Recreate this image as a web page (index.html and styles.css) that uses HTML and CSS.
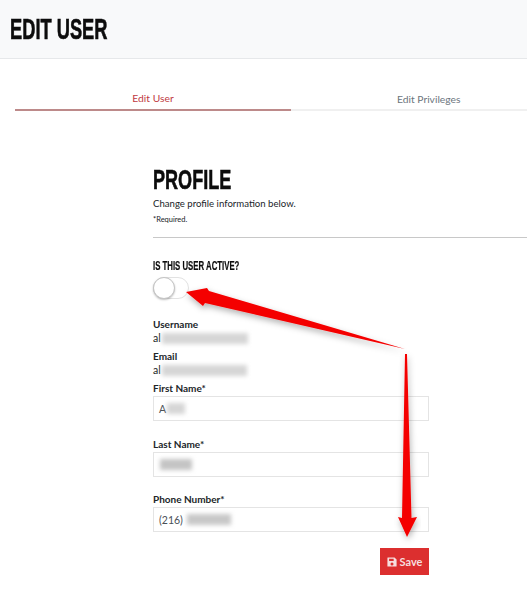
FILE: index.html
```html
<!DOCTYPE html>
<html lang="en">

<head>
    <meta charset="UTF-8">
    <meta name="viewport" content="width=device-width, initial-scale=1.0">
    <title>Edit User</title>
    <link rel="stylesheet" href="styles.css">
</head>

<body>
    <header class="page-header">
        <h1 class="page-title">EDIT USER</h1>
    </header>

    <nav class="tabs">
        <a class="tab tab-active" href="#">Edit User</a>
        <a class="tab tab-second" href="#">Edit Privileges</a>
    </nav>

    <main class="profile">
        <h2 class="profile-title">PROFILE</h2>
        <p class="profile-note">Change profile information below.</p>
        <p class="profile-required">*Required.</p>
        <hr class="profile-rule">

        <h3 class="active-label">IS THIS USER ACTIVE?</h3>
        <div class="switch"><span class="switch-knob"></span></div>

        <div class="static-field">
            <div class="field-label">Username</div>
            <div class="static-value">al<span class="blur blur-username"></span></div>
        </div>
        <div class="static-field">
            <div class="field-label">Email</div>
            <div class="static-value">al<span class="blur blur-email"></span></div>
        </div>

        <div class="form-field">
            <label class="field-label">First Name*</label>
            <div class="text-box">A<span class="blur blur-first"></span></div>
        </div>
        <div class="form-field">
            <label class="field-label">Last Name*</label>
            <div class="text-box"><span class="blur blur-last"></span></div>
        </div>
        <div class="form-field form-field-phone">
            <label class="field-label">Phone Number*</label>
            <div class="text-box">(216)<span class="blur blur-phone"></span></div>
        </div>

        <div class="form-actions">
            <button class="save-btn">
                <svg class="save-icon" viewBox="0 0 12 12" width="10" height="10">
                    <path fill="currentColor" fill-rule="evenodd" d="M1 0.5h8l2.5 2.5v8a0.5 0.5 0 0 1-0.5 0.5H1a0.5 0.5 0 0 1-0.5-0.5V1a0.5 0.5 0 0 1 0.5-0.5zM2.5 2v2.8h5.5V2zM6 6.5a1.8 1.8 0 1 0 0 3.6a1.8 1.8 0 0 0 0-3.6z"/>
                </svg>
                Save
            </button>
        </div>
    </main>

    <svg class="arrows" viewBox="0 0 527 589" width="527" height="589">
        <defs>
            <filter id="arrowShadow" x="-20%" y="-20%" width="140%" height="140%">
                <feDropShadow dx="1" dy="3" stdDeviation="3" flood-color="#000" flood-opacity="0.3"/>
            </filter>
        </defs>
        <polygon filter="url(#arrowShadow)" fill="#f40000" points="405,349 209,291 207,288 186,292 203,306 205,303"/>
        <polygon filter="url(#arrowShadow)" fill="#f40000" points="405,354 407,354 411.5,518 417,517 407,537 398,517 402,518"/>
    </svg>
</body>

</html>
```

FILE: styles.css
```css
* {
    margin: 0;
    padding: 0;
    box-sizing: border-box;
}

body {
    position: relative;
    width: 527px;
    height: 589px;
    overflow: hidden;
    background-color: white;
    font-family: Lato, "Open Sans", sans-serif;
    font-size: 11px;
    color: #212529;
}

.page-header {
    height: 59px;
    padding: 12px 10px 0;
    background-color: #f8f9fa;
    border-bottom: 1px solid #e6e8ea;
}

/* no condensed face installed, so the display headings get squeezed */
.page-title,
.profile-title,
.active-label {
    font-family: "Liberation Sans", sans-serif;
    font-weight: bold;
    color: #0c0c0c;
    transform-origin: left center;
}

.page-title {
    font-size: 29px;
    line-height: 34px;
    -webkit-text-stroke: 0.6px #0c0c0c;
    transform: scaleX(0.63);
}

.tabs {
    display: flex;
    margin: 27px 0 0 15px;
}

.tab {
    height: 25px;
    line-height: 24px;
    text-decoration: none;
    color: #6c757d;
    font-size: 10.3px;
    border-bottom: 2px solid #f0f0f0;
}

.tab-active {
    width: 276px;
    text-align: center;
    color: #c0393f;
    border-bottom-color: #bd8a8a;
}

.tab-second {
    width: 236px;
    padding-left: 106px;
    line-height: 26px;
}

.profile {
    margin: 54px 0 0 153px;
}

.profile-title {
    font-size: 28px;
    line-height: 30px;
    -webkit-text-stroke: 0.6px #0c0c0c;
    transform: scaleX(0.645);
}

.profile-note {
    margin-top: 2px;
    font-size: 9.6px;
    line-height: 14px;
}

.profile-required {
    margin-top: 3px;
    font-size: 7.5px;
    line-height: 11px;
}

.profile-rule {
    margin-top: 12px;
    border: none;
    border-top: 1px solid #c8c8c8;
}

.active-label {
    margin-top: 21px;
    font-size: 12px;
    line-height: 14px;
    -webkit-text-stroke: 0.2px #0c0c0c;
    transform: scaleX(0.65);
}

.switch {
    width: 36px;
    height: 22px;
    margin: 4px 0 18px;
    border: 1px solid #e2e2e2;
    border-radius: 11px;
    background-color: white;
}

.switch-knob {
    display: block;
    width: 22px;
    height: 22px;
    margin: -1px;
    border-radius: 50%;
    background-color: white;
    border: 1px solid #c4c4c4;
    box-shadow: 0 1px 2px rgba(0, 0, 0, 0.25);
}

.static-field {
    width: 276px;
    line-height: 14px;
}

.static-field + .static-field {
    margin-top: 4px;
}

.field-label {
    display: block;
    font-size: 10px;
    line-height: 14px;
    font-weight: 700;
    color: #212529;
}

.static-value {
    display: flex;
    align-items: center;
    height: 14px;
    font-size: 10.5px;
}

.blur {
    display: inline-block;
    height: 11px;
    background-color: #d6d6d6;
    filter: blur(2px);
}

.blur-username {
    width: 86px;
    margin-left: 1px;
}

.blur-email {
    width: 85px;
    margin-left: 1px;
}

.blur-first {
    width: 18px;
    margin-left: 1px;
}

.blur-last {
    width: 32px;
    margin-left: 1px;
    background-color: #c4c4c4;
}

.blur-phone {
    width: 44px;
    margin-left: 4px;
    background-color: #c8c8c8;
}

.form-field {
    width: 276px;
    margin-top: 4px;
}

.form-field + .form-field {
    margin-top: 16px;
}

.form-field + .form-field-phone {
    margin-top: 15px;
}

.text-box {
    display: flex;
    align-items: center;
    height: 25px;
    margin-top: 1px;
    padding: 0 5px;
    border: 1px solid #e4e4e4;
    font-size: 10.5px;
    color: #495057;
}

.form-actions {
    display: flex;
    justify-content: flex-end;
    width: 276px;
    margin-top: 16px;
}

.save-btn {
    display: flex;
    align-items: center;
    justify-content: center;
    gap: 3px;
    width: 49px;
    height: 27px;
    border: none;
    background-color: #dc2f2f;
    color: #f6dede;
    font-family: Lato, "Open Sans", sans-serif;
    font-size: 11px;
    font-weight: 700;
}

.arrows {
    position: absolute;
    top: 0;
    left: 0;
}
```
